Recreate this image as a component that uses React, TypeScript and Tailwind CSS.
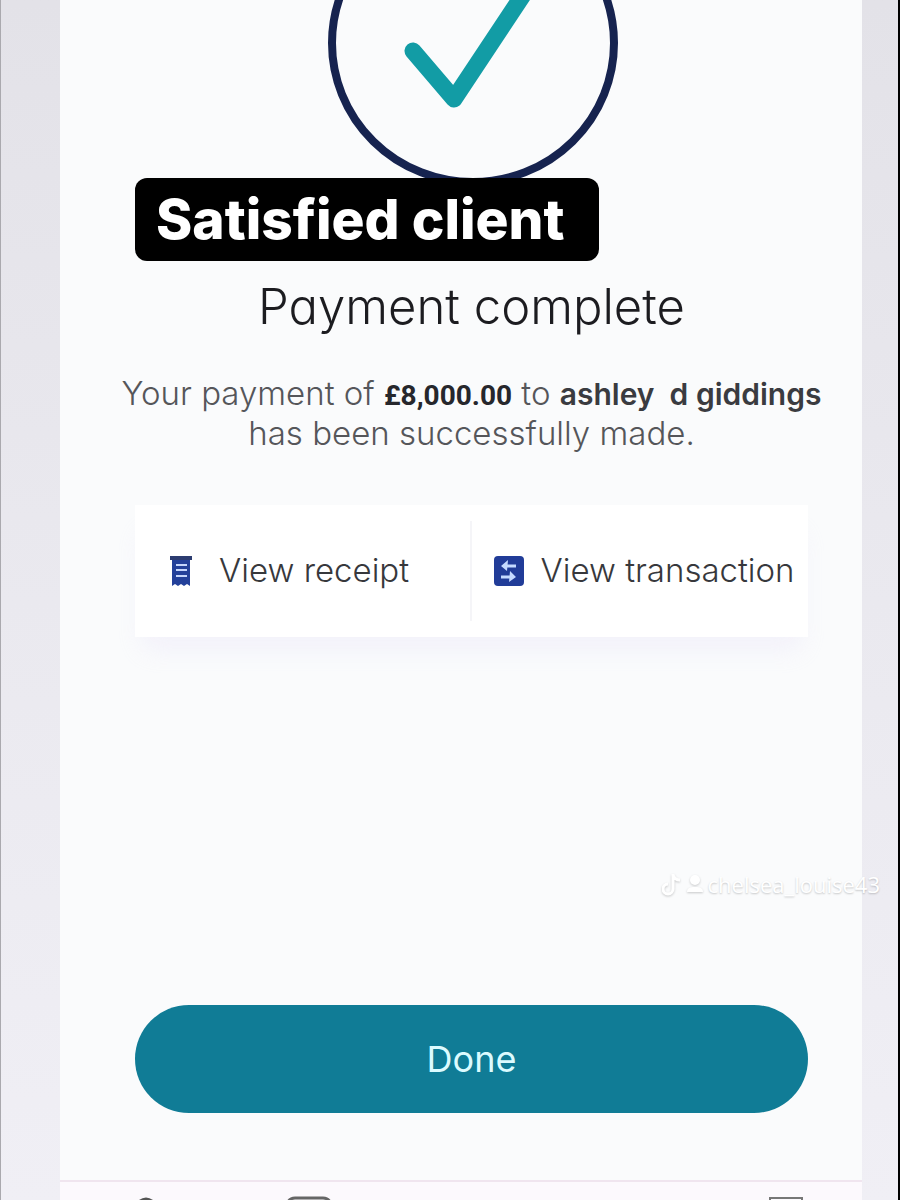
import React from 'react';

function SuccessMark() {
  return (
    <svg className="mx-auto block" width="292" height="178" viewBox="0 0 292 178" fill="none" aria-hidden="true">
      <ellipse cx="147" cy="43" rx="141" ry="139" stroke="#16234f" strokeWidth="8" />
      <path d="M87 51 L128 99 L203 -14" stroke="#129ca5" strokeWidth="17" strokeLinecap="round" strokeLinejoin="round" />
    </svg>
  );
}

function ReceiptIcon() {
  return (
    <svg className="shrink-0" width="24" height="32" viewBox="0 0 24 32" aria-hidden="true">
      <path d="M3 2h18v29l-3-2-3 2-3-2-3 2-3-2-3 2z" fill="#23409a" />
      <path d="M1 1h22v4H1z" fill="#2c3c70" />
      <path d="M7 10h11M7 15h11M7 21h11" stroke="#c5d5fb" strokeWidth="2" />
    </svg>
  );
}

function TransactionIcon() {
  return (
    <svg className="shrink-0" width="32" height="32" viewBox="0 0 32 32" fill="none" aria-hidden="true">
      <rect x="1" y="1" width="30" height="30" rx="4" fill="#213c98" />
      <path d="M23 11H12M8 22h12" stroke="#c5daff" strokeWidth="3" />
      <path d="M8 11l7-6-1 11zM23 22l-7 5 1-11z" fill="#c5daff" />
    </svg>
  );
}

function Watermark() {
  return (
    <div className="absolute right-[18px] top-[870px] flex items-center gap-1 font-['Open_Sans',sans-serif] text-[22px] leading-7 text-white [text-shadow:0_1px_2px_rgba(0,0,0,0.22)]">
      <svg className="drop-shadow-[0_1px_1px_rgba(0,0,0,0.2)]" width="20" height="24" viewBox="0 0 20 24" fill="none" stroke="#fff" strokeWidth="3" aria-hidden="true">
        <path d="M11 2v15a5 5 0 1 1-5-5M11 3c1 3 3 5 7 5" />
      </svg>
      <svg className="drop-shadow-[0_1px_1px_rgba(0,0,0,0.2)]" width="18" height="24" viewBox="0 0 18 24" fill="#fff" aria-hidden="true">
        <circle cx="9" cy="8" r="5" />
        <path d="M1 20c0-4 3-5 8-5s8 1 8 5z" />
      </svg>
      <span>chelsea_louise43</span>
    </div>
  );
}

function TabBar() {
  return (
    <nav className="h-[20px] overflow-hidden border-t-2 border-[#f0e5ef] bg-[#fcf9fd]" aria-label="Main">
      <div className="grid h-full grid-cols-[172px_154px_1fr_152px] items-end">
        <svg className="justify-self-center" width="18" height="3" viewBox="0 0 18 3" aria-hidden="true">
          <path d="M2 3 Q9 -2 16 3z" fill="#555" />
        </svg>
        <svg className="justify-self-center" width="44" height="4" viewBox="0 0 44 4" fill="none" stroke="#666" strokeWidth="3" aria-hidden="true">
          <path d="M1 6Q3 2 8 2h28q5 0 7 4" />
        </svg>
        <span />
        <svg className="justify-self-center" width="34" height="4" viewBox="0 0 34 4" fill="none" stroke="#777" strokeWidth="2" aria-hidden="true">
          <path d="M1 6V2h32v4" />
        </svg>
      </div>
    </nav>
  );
}

export default function App() {
  return (
    <div className="relative flex min-h-screen overflow-hidden border-l border-r-2 border-l-[#aaa9ae] border-r-black bg-linear-to-b from-[#e3e2e8] via-[#eae9ef] to-[#f0eff5] pl-[59px] pr-9 font-['Inter',sans-serif]">
      <div className="flex min-w-0 flex-1 flex-col bg-[#fafbfc]">
        <main className="flex flex-1 flex-col pl-[75px] pr-[54px]">
          <SuccessMark />
          <p className="w-[464px] max-w-full self-start rounded-xl bg-black pl-[21px] text-[55px] font-extrabold leading-[83px] text-white">
            Satisfied client
          </p>

          <h1 className="mt-4 whitespace-nowrap text-center text-[49px] font-light leading-[60px] text-[#1c1c20] [font-feature-settings:'cv11']">
            Payment complete
          </h1>
          <p className="-mx-4 mt-9 text-center text-[33px] font-light leading-10 text-[#55565a]">
            Your payment of{' '}
            <strong className="font-['Roboto',sans-serif] text-[28px] font-bold leading-none text-[#26272c]">£8,000.00</strong> to{' '}
            <strong className="whitespace-pre text-[30px] font-semibold leading-none text-[#3a3b40]">ashley  d giddings</strong>
            <br />
            has been successfully made.
          </p>

          <div className="mt-[52px] grid grid-cols-2 items-center bg-white py-4 text-[33px] font-light text-[#37383c] shadow-[0_20px_24px_-8px_rgba(225,220,250,0.3)]">
            <button className="flex h-[100px] items-center gap-[26px] whitespace-nowrap border-r-2 border-[#f5f5f8] pl-[34px]">
              <ReceiptIcon />
              View receipt
            </button>
            <button className="flex h-[100px] items-center gap-4 whitespace-nowrap pl-[21px]">
              <TransactionIcon />
              View transaction
            </button>
          </div>

          <button className="mb-[67px] mt-auto h-[108px] rounded-full bg-[#107c96] text-[36px] font-normal text-[#dcfbff]">
            Done
          </button>
        </main>
        <TabBar />
      </div>
      <Watermark />
    </div>
  );
}
